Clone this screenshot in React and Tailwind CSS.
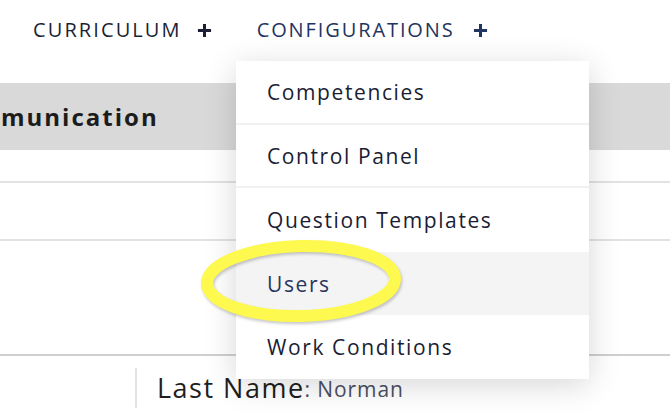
import React from "react";

function Plus({ className }) {
  return (
    <svg viewBox="0 0 16 16" className={className} fill="none" stroke="currentColor" strokeWidth="3.2" strokeLinecap="butt">
      <path d="M8 1v14M1 8h14" />
    </svg>
  );
}

const items = ["Competencies", "Control Panel", "Question Templates", "Users", "Work Conditions"];

export default function App() {
  return (
    <div
      className="relative w-[670px] h-[414px] overflow-hidden bg-white"
      style={{ fontFamily: '"Open Sans", "Noto Sans", sans-serif' }}
    >
      {/* Top nav */}
      <div className="flex items-center h-[61px] pl-[33px] pb-[1px]">
        <div className="flex items-center text-[#1b1f35]">
          <span className="text-[20px] tracking-[2.1px]">CURRICULUM</span>
          <Plus className="w-[15px] h-[15px] ml-[15px]" />
        </div>
        <div className="flex items-center text-[#1f3461] ml-[45px]">
          <span className="text-[20px] tracking-[1.9px]">CONFIGURATIONS</span>
          <Plus className="w-[15px] h-[15px] ml-[18px]" />
        </div>
      </div>

      {/* Content table */}
      <div className="mt-[22px]">
        <div className="h-[67px] bg-[#d9d9d9] flex items-center pl-[1px]">
          <span className="text-[24px] font-bold text-[#1c1c1c] tracking-[2px]">munication</span>
        </div>
        <div className="h-[31px]" />
        <div className="h-[2px] bg-[#e2e2e2]" />
        <div className="h-[56px]" />
        <div className="h-[2px] bg-[#e2e2e2]" />
        <div className="h-[113px]" />
        <div className="h-[2px] bg-[#cfcfcf]" />
        <div className="flex items-stretch pt-[12px] h-[52px]">
          <div className="w-[135px]" />
          <div className="w-[2px] bg-[#e4e4e4]" />
          <div className="pl-[20px] flex items-center">
            <span className="text-[27px] text-[#1e1e1e] tracking-[1.5px]">Last Name</span>
            <span className="text-[21px] text-[#4a5163] mt-[4px] tracking-[0.9px]">: Norman</span>
          </div>
        </div>
      </div>

      {/* Dropdown */}
      <div className="absolute left-[236px] top-[61px] w-[353px] bg-white shadow-[0_6px_30px_rgba(0,0,0,0.16)]">
        {items.map((it, i) => (
          <div
            key={it}
            className={
              "h-[63.6px] flex items-center pl-[31px] pt-[2px] text-[21px] tracking-[1.6px] " +
              (it === "Users" ? "bg-[#f4f4f4] text-[#28365f] " : "text-[#1a1d33] ") +
              (i < 2 ? "border-b-[2px] border-[#f1f1f1]" : "")
            }
          >
            {it}
          </div>
        ))}
      </div>

      {/* Yellow highlight ellipse */}
      <svg
        className="absolute left-[191px] top-[232px] w-[220px] h-[100px]"
        viewBox="0 0 220 100"
        style={{ filter: "drop-shadow(1px 2px 1.5px rgba(0,0,0,0.22))" }}
      >
        <ellipse cx="110" cy="49" rx="94" ry="35" fill="none" stroke="#fdf94e" strokeWidth="12" transform="rotate(-1.5 110 49)" />
      </svg>
    </div>
  );
}
